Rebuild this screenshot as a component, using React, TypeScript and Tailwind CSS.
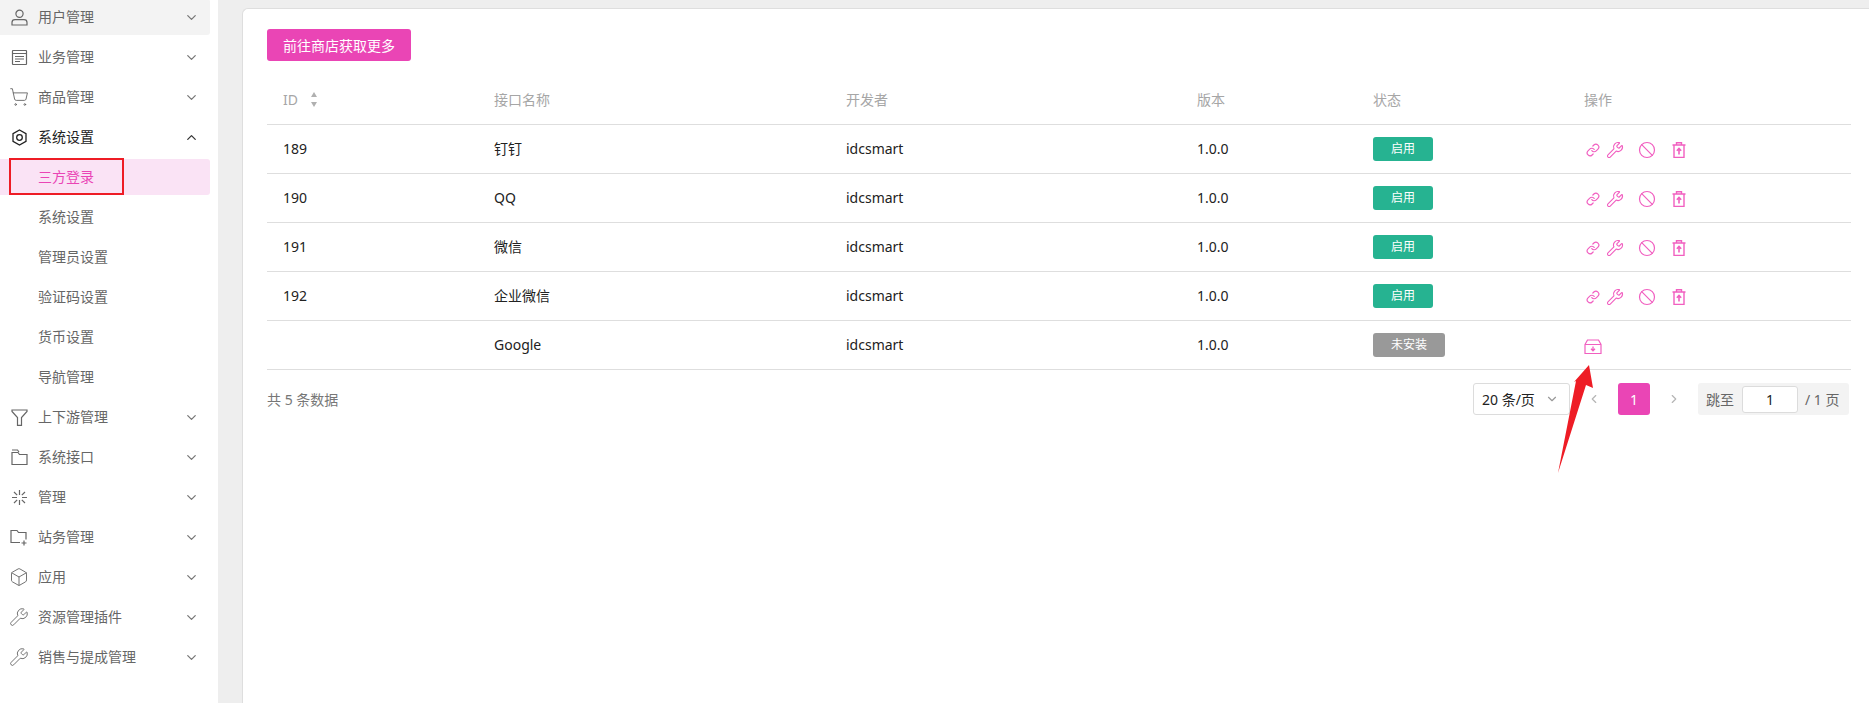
import {
  ChevronDown,
  ChevronUp,
  ChevronLeft,
  ChevronRight,
  ShoppingCart,
  Box,
  Wrench,
  Link,
  Ban,
} from "lucide-react";
import type { ReactNode } from "react";

const UserIcon = () => (
  <svg width="17" height="17" viewBox="0 0 17 17" fill="none" stroke="currentColor" strokeWidth="1.2">
    <circle cx="8.5" cy="4.8" r="3.6" />
    <path d="M1 16v-2.5c0-1.6 1.4-2.8 3-2.8h9c1.6 0 3 1.2 3 2.8V16z" />
  </svg>
);

const FileIcon = () => (
  <svg width="17" height="17" viewBox="0 0 17 17" fill="none" stroke="currentColor" strokeWidth="1.2">
    <rect x="1.5" y="1.5" width="14" height="14" rx="0.5" />
    <path d="M1.5 4.5h14M4 7.5h9M4 10h9M4 12.5h5" />
  </svg>
);

const HexIcon = () => (
  <svg width="17" height="17" viewBox="0 0 17 17" fill="none" stroke="currentColor" strokeWidth="1.3">
    <path d="M8.5 1l6.5 3.7v7.6L8.5 16 2 12.3V4.7z" />
    <circle cx="8.5" cy="8.5" r="2.8" />
  </svg>
);

const FunnelIcon = () => (
  <svg width="17" height="17" viewBox="0 0 17 17" fill="none" stroke="currentColor" strokeWidth="1.2">
    <path d="M1 1h15v1.5L10.5 8.5v7.8h-4V8.5L1 2.5z" />
  </svg>
);

const FolderIcon = () => (
  <svg width="17" height="17" viewBox="0 0 17 17" fill="none" stroke="currentColor" strokeWidth="1.2">
    <path d="M1 15.5V3.5h6l1.5 2h7.5v10z" />
    <path d="M1 1h5.5l1.5 2" />
  </svg>
);

const BurstIcon = () => (
  <svg width="17" height="17" viewBox="0 0 17 17" fill="none" stroke="currentColor" strokeWidth="1.2">
    <path d="M8.5 1v5M8.5 11v5M1 8.5h5M11 8.5h5M3 3l3.2 3.2M10.8 10.8L14 14M14 3l-3.2 3.2M6.2 10.8L3 14" />
  </svg>
);

const FolderPlusIcon = () => (
  <svg width="18" height="17" viewBox="0 0 18 17" fill="none" stroke="currentColor" strokeWidth="1.2">
    <path d="M10 13.5H1V1.5h6l1.5 2h7.5v7" />
    <path d="M14 11.5v5M11.5 14h5" />
  </svg>
);

const TrashUpIcon = () => (
  <svg width="14" height="16" viewBox="0 0 14 16" fill="none" stroke="currentColor" strokeWidth="1.4">
    <path d="M0.5 3h13M4.5 3V0.8h5V3M2 3v12.4h10V3" />
    <path d="M7 12.5V6.5M4.8 8.7L7 6.5l2.2 2.2" strokeWidth="1.6" />
  </svg>
);

const InstallIcon = () => (
  <svg width="18" height="15" viewBox="0 0 18 15" fill="none" stroke="currentColor" strokeWidth="1.2">
    <path d="M1 5.5L3.5 1h11L17 5.5v9H1zM1 5.5h16" />
    <path d="M9 7.5v4M7 9.8l2 2 2-2" strokeWidth="1.3" />
  </svg>
);

type MenuItem = { label: string; icon?: ReactNode; open?: boolean; hover?: boolean; active?: boolean; sub?: boolean };

const menu: MenuItem[] = [
  { label: "用户管理", icon: <UserIcon />, hover: true },
  { label: "业务管理", icon: <FileIcon /> },
  { label: "商品管理", icon: <ShoppingCart size={20} strokeWidth={1.1} /> },
  { label: "系统设置", icon: <HexIcon />, open: true },
  { label: "三方登录", sub: true, active: true },
  { label: "系统设置", sub: true },
  { label: "管理员设置", sub: true },
  { label: "验证码设置", sub: true },
  { label: "货币设置", sub: true },
  { label: "导航管理", sub: true },
  { label: "上下游管理", icon: <FunnelIcon /> },
  { label: "系统接口", icon: <FolderIcon /> },
  { label: "管理", icon: <BurstIcon /> },
  { label: "站务管理", icon: <FolderPlusIcon /> },
  { label: "应用", icon: <Box size={20} strokeWidth={1.1} /> },
  { label: "资源管理插件", icon: <Wrench size={20} strokeWidth={1.1} /> },
  { label: "销售与提成管理", icon: <Wrench size={20} strokeWidth={1.1} /> },
];

const rows = [
  { id: "189", name: "钉钉", installed: true },
  { id: "190", name: "QQ", installed: true },
  { id: "191", name: "微信", installed: true },
  { id: "192", name: "企业微信", installed: true },
  { id: "", name: "Google", installed: false },
];

const gridCols = "grid grid-cols-[211px_352px_351px_176px_211px_283px] items-center";

function Sidebar() {
  return (
    <aside className="w-[218px] shrink-0 bg-white -mt-px pr-2 flex flex-col gap-1 h-[704px]">
      {menu.map((m, i) => (
        <div
          key={i}
          className={`h-9 shrink-0 flex items-center rounded-r-[3px] ${
            m.active ? "bg-[#fae3f5] text-[#ea45b5]" : m.hover ? "bg-[#f3f3f3] text-[#666666]" : m.open ? "text-[#222222]" : "text-[#666666]"
          }`}
        >
          <span className="w-[38px] shrink-0 flex justify-center px-[2px]">{m.icon}</span>
          <span className="flex-1 text-[14px] leading-none">{m.label}</span>
          {!m.sub &&
            (m.open ? (
              <ChevronUp size={15} className="mr-[11px] text-[#333333]" />
            ) : (
              <ChevronDown size={15} className="mr-[11px] text-[#777777]" />
            ))}
        </div>
      ))}
    </aside>
  );
}

function Table() {
  return (
    <div className="border-b border-[#dedede]">
      <div className={`${gridCols} h-[45px] pb-[5px] -mt-[1px] text-[14px] text-[#a6a6a6] border-b border-[#dedede]`}>
        <div className="pl-4 flex items-center">
          ID
          <span className="ml-[13px] flex flex-col gap-[5px]">
            <span className="w-0 h-0 border-x-[3.5px] border-x-transparent border-b-[5px] border-b-[#b0b0b0]" />
            <span className="w-0 h-0 border-x-[3.5px] border-x-transparent border-t-[5px] border-t-[#b0b0b0]" />
          </span>
        </div>
        <div className="pl-4">接口名称</div>
        <div className="pl-4">开发者</div>
        <div className="pl-4">版本</div>
        <div className="pl-4">状态</div>
        <div className="pl-4">操作</div>
      </div>
      {rows.map((r, i) => (
        <div key={i} className={`${gridCols} text-[14px] text-[#222222] ${i < rows.length - 1 ? "h-[49px] border-b border-[#dedede]" : "h-12"}`}>
          <div className="pl-4 pb-[2px]">{r.id}</div>
          <div className="pl-4 pb-[2px]">{r.name}</div>
          <div className="pl-4 pb-[2px]">idcsmart</div>
          <div className="pl-4 pb-[2px]">1.0.0</div>
          <div className="pl-4">
            {r.installed ? (
              <span className="inline-flex items-center justify-center w-[60px] h-6 rounded-[3px] bg-[#26b391] text-white text-[12px]">启用</span>
            ) : (
              <span className="inline-flex items-center justify-center w-[72px] h-6 rounded-[3px] bg-[#999999] text-white text-[12px]">未安装</span>
            )}
          </div>
          <div className="pl-4 pt-[2px] flex items-center text-[#f15fc0]">
            {r.installed ? (
              <>
                <Link size={14} strokeWidth={2} className="ml-[2px]" />
                <Wrench size={18} strokeWidth={1.5} className="ml-[6px]" />
                <Ban size={18} strokeWidth={1.6} className="ml-[14px]" />
                <span className="ml-[16px] flex"><TrashUpIcon /></span>
              </>
            ) : (
              <InstallIcon />
            )}
          </div>
        </div>
      ))}
    </div>
  );
}

function Pagination() {
  return (
    <div className="flex items-center justify-between mt-[13px] h-8 text-[14px]">
      <span className="text-[#777777]">共 5 条数据</span>
      <div className="flex items-center mr-[2px]">
        <div className="w-[97px] h-8 border border-[#dcdcdc] rounded-[3px] flex items-center justify-between pl-[8px] pr-[10px] text-[#222222]">
          <span>20 条/页</span>
          <ChevronDown size={14} className="text-[#999999]" />
        </div>
        <div className="w-[48px] flex justify-center">
          <ChevronLeft size={14} className="text-[#b5b5b5]" />
        </div>
        <div className="w-8 h-8 rounded-[3px] bg-[#ea45b5] text-white flex items-center justify-center">1</div>
        <div className="w-[48px] flex justify-center">
          <ChevronRight size={14} className="text-[#b5b5b5]" />
        </div>
        <div className="w-[151px] h-8 rounded-[3px] bg-[#f3f3f3] flex items-center pl-2 text-[#666666]">
          <span>跳至</span>
          <span className="ml-[8px] w-[56px] h-[27px] bg-white border border-[#dcdcdc] rounded-[3px] flex items-center justify-center text-[#222222]">1</span>
          <span className="ml-[7px]">/ 1 页</span>
        </div>
      </div>
    </div>
  );
}

export default function App() {
  return (
    <div className="relative h-[703px] w-[1869px] overflow-hidden bg-[#eeeeee] flex font-['Noto_Sans','Noto_Sans_CJK_SC',sans-serif]">
      <Sidebar />
      <main className="ml-[24px] mt-2 flex-1 bg-white border-l border-t border-[#dedede] rounded-tl-[6px] pl-[24px] pr-[18px] pt-[20px] h-[695px]">
        <button className="h-8 w-[144px] rounded-[3px] bg-[#ea45b5] text-white text-[14px] flex items-center justify-center">前往商店获取更多</button>
        <div className="mt-[20px]">
          <Table />
        </div>
        <Pagination />
      </main>
      {/* 标注：红框和箭头 */}
      <div className="absolute left-[9px] top-[158px] w-[115px] h-[37px] border-2 border-[#ee1c25]" />
      <svg className="absolute left-[1550px] top-[360px]" width="50" height="120" viewBox="0 0 50 120">
        <path d="M39 5L43 28L36 25L8 113L26 21L24 22z" fill="#ee1c25" />
      </svg>
    </div>
  );
}
